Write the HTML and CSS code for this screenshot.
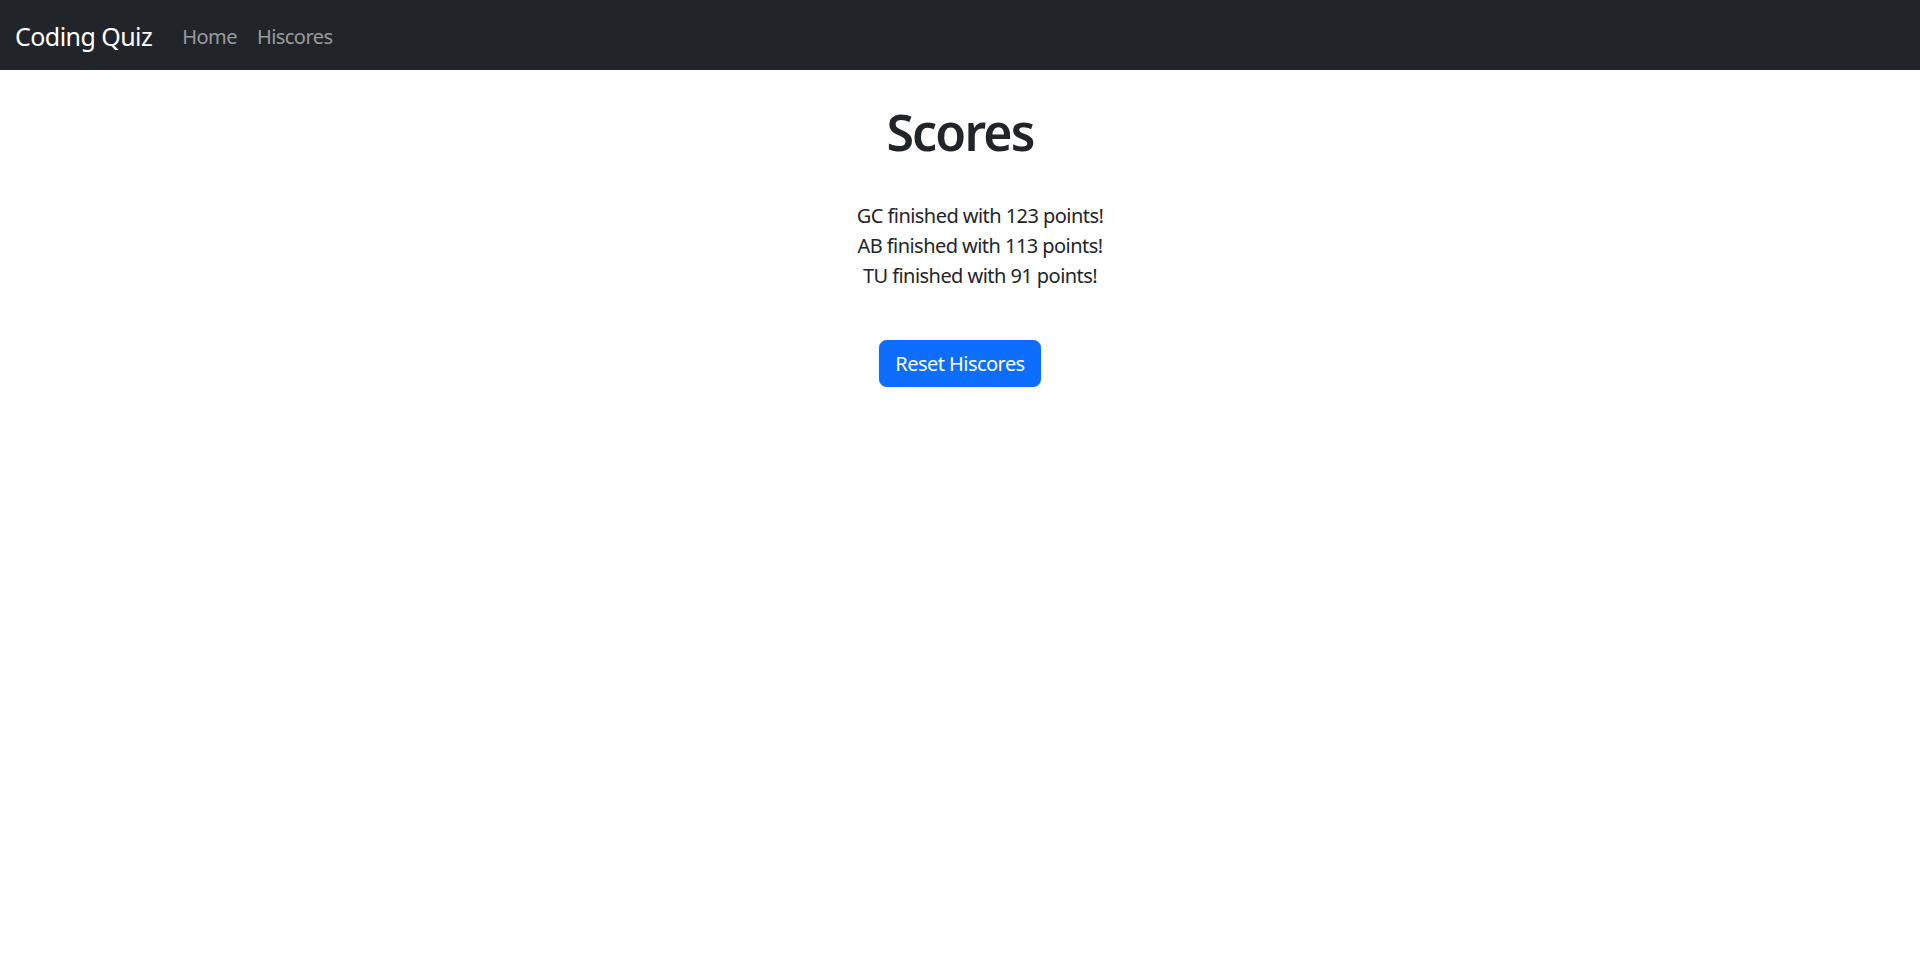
FILE: index.html
```html
<!DOCTYPE html>
<html lang="en">
<head>
<meta charset="utf-8">
<title>Coding Quiz - Hiscores</title>
<link rel="stylesheet" href="styles.css">
</head>
<body>
<nav class="navbar">
  <a class="brand" href="#">Coding Quiz</a>
  <ul class="nav">
    <li><a class="nav-link" href="#">Home</a></li>
    <li><a class="nav-link" href="#">Hiscores</a></li>
  </ul>
</nav>
<main class="content">
  <h1 class="title">Scores</h1>
  <ul class="scores">
    <li class="score">GC finished with 123 points!</li>
    <li class="score">AB finished with 113 points!</li>
    <li class="score">TU finished with 91 points!</li>
  </ul>
  <button class="btn" type="button">Reset Hiscores</button>
</main>
</body>
</html>
```
FILE: styles.css
```css
* { box-sizing: border-box; }
html, body { margin: 0; padding: 0; }
body {
  font-family: "Noto Sans", "Open Sans", sans-serif;
  font-size: 20px;
  line-height: 1.5;
  letter-spacing: -0.55px;
  color: #212529;
  background: #fff;
}
.navbar {
  display: flex;
  align-items: center;
  height: 70px;
  padding: 3px 15px 0;
  background: #212529;
}
.brand {
  font-size: 25px;
  color: #fff;
  text-decoration: none;
  margin-right: 20px;
  line-height: 1.5;
}
.nav {
  display: flex;
  list-style: none;
  margin: 0;
  padding: 0;
}
.nav-link {
  display: block;
  padding: 10px 10px;
  color: rgba(255,255,255,.55);
  text-decoration: none;
}
.content {
  display: flex;
  flex-direction: column;
  align-items: center;
  text-align: center;
}
.title {
  margin: 32px 0 0;
  font-size: 50px;
  font-weight: 600;
  letter-spacing: -1.8px;
  line-height: 1.2;
}
.scores {
  list-style: none;
  margin: 39px 0 0;
  padding: 0 0 0 40px;
}
.btn {
  margin-top: 49px;
  font-family: inherit;
  font-size: 20px;
  letter-spacing: -0.55px;
  line-height: 1.5;
  color: #fff;
  background: #0d6efd;
  border: 1px solid #0d6efd;
  border-radius: 7.5px;
  padding: 7.5px 15px;
}
```
